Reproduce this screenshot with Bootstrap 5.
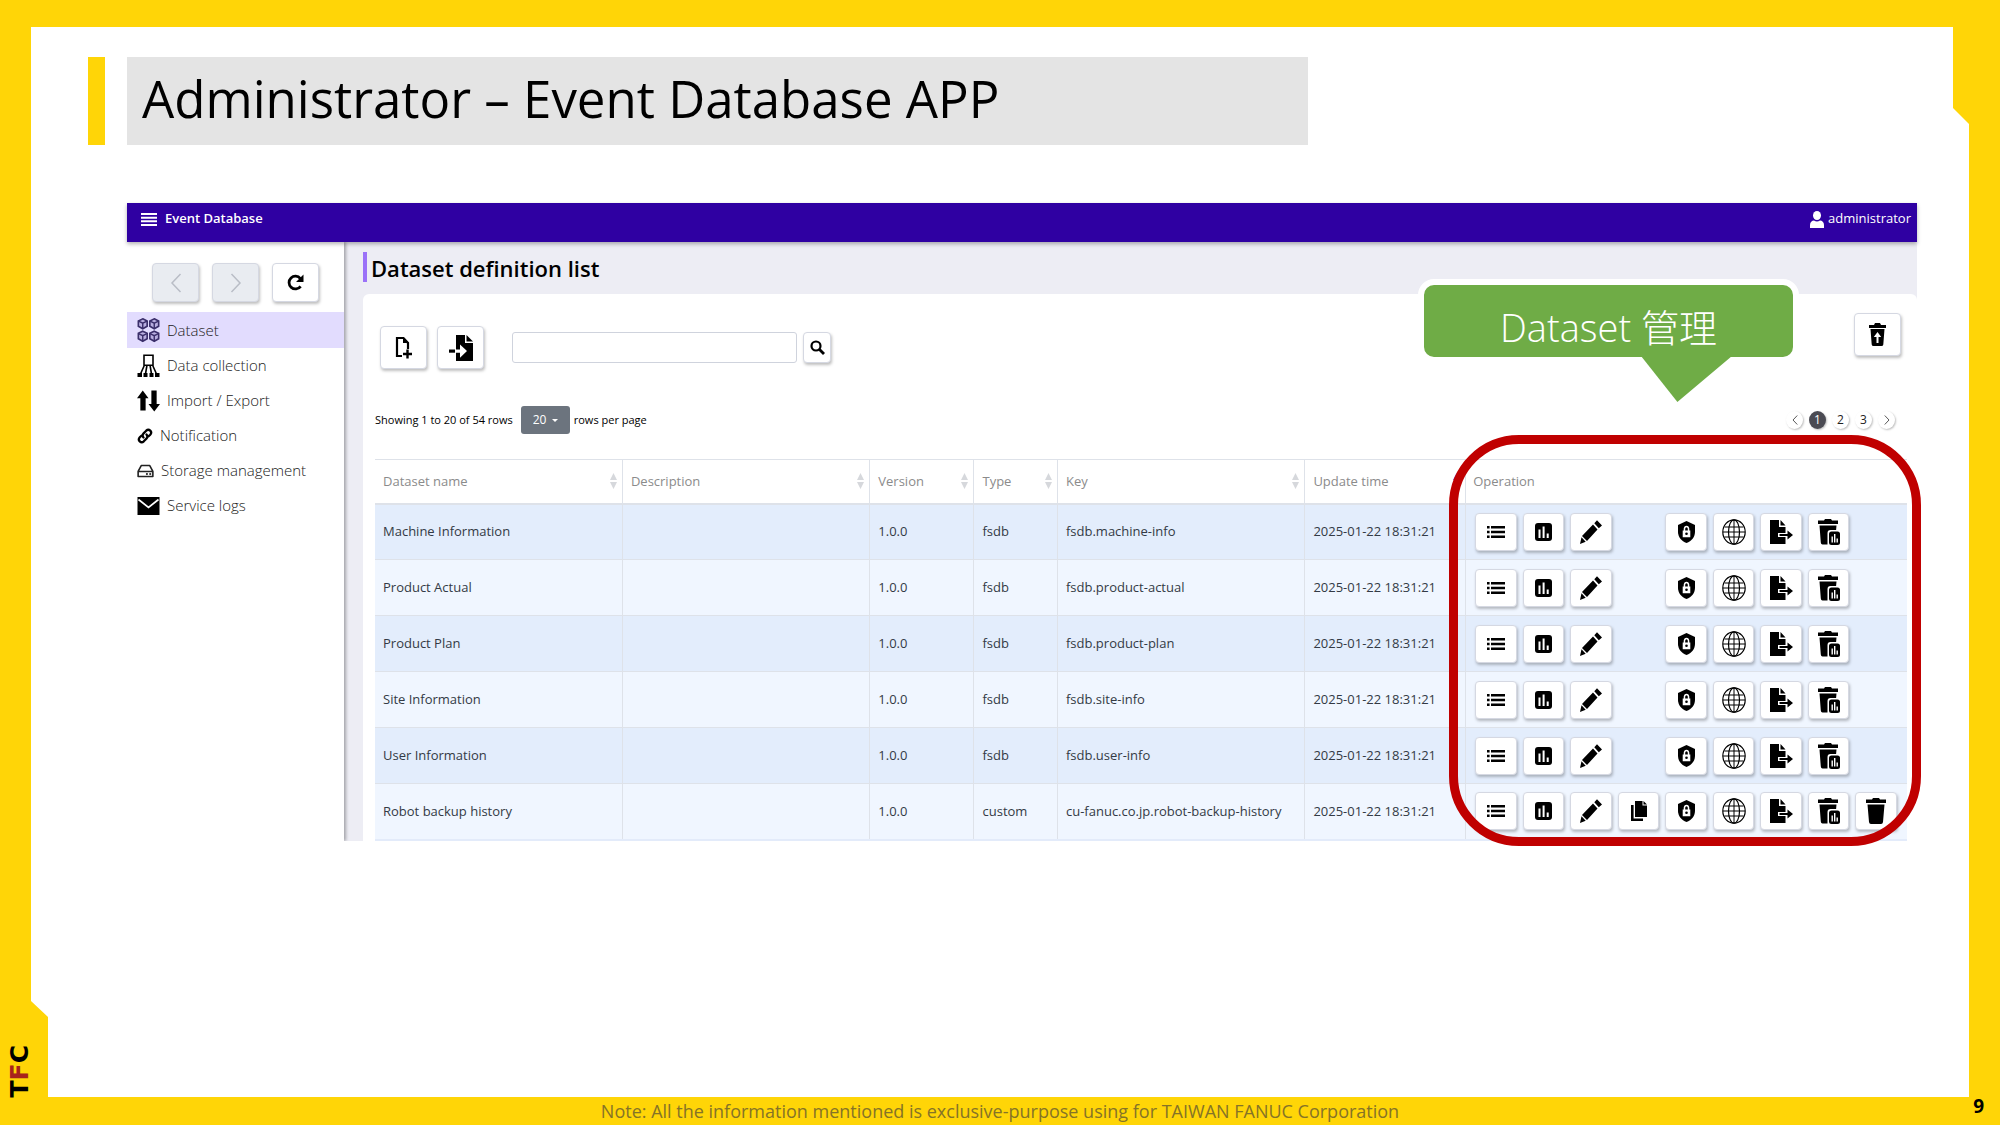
<!DOCTYPE html>
<html lang="en">
<head>
<meta charset="utf-8">
<meta name="viewport" content="width=device-width, initial-scale=1">
<title>Administrator – Event Database APP</title>
<link href="https://cdn.jsdelivr.net/npm/bootstrap@5.3.0/dist/css/bootstrap.min.css" rel="stylesheet">
<style>
  :root { --frame: #ffd507; --brand: #2f00a2; --line: #dee2e9; }
  body { background: var(--frame); font-family: "Open Sans", "Noto Sans", "Noto Sans CJK TC", sans-serif; color: #000; }
  .deck { min-height: 100vh; padding: 27px 31px 0 31px; }
  .sheet { background: #fff; padding: 30px 52px 0 57px;
    clip-path: polygon(0 0, calc(100% - 16px) 0, calc(100% - 16px) 81px, 100% 97px, 100% 100%, 17px 100%, 17px calc(100% - 80px), 0 calc(100% - 96px)); }
  .title-accent { width: 17px; background: var(--frame); }
  .title-box { width: 1181px; max-width: 90%; height: 88px; padding-left: 15px; margin-left: 22px; background: #e4e4e4; font-size: 51px; line-height: 82px; font-weight: 400; }
  .app { margin: 58px 0 0 39px; font-size: 13px; }
  .app-bar { height: 39px; padding: 0 6px 7px 14px; background: var(--brand); color: #fff; box-shadow: 0 2px 4px rgba(0,0,0,.3); z-index: 2; }
  .app-name { font-size: 13px; font-weight: 600; color: #fff; }
  .user-name { font-size: 13px; color: #fff; }
  .side { width: 217px; padding-top: 21px; box-shadow: 2px 0 3px rgba(0,0,0,.3); z-index: 1; }
  .side-tools { gap: 13px; padding-left: 25px; }
  .side-nav { margin-top: 10px; }
  .side-link { height: 35px; padding-left: 10px; gap: 7px; color: #222; font-size: 15px; font-weight: 300; text-decoration: none; }
  .side-link.on { background: #e2dcfe; height: 36px; }
  .tool { background: #fff; border: 1px solid #d5d8e2; border-radius: 4px; box-shadow: 1px 2px 3px rgba(0,0,0,.25); padding: 0; color: #000; display: inline-flex; align-items: center; justify-content: center; }
  .tool:disabled { background: #e9ecf1; color: #b9bdc6; }
  .tool-nav { width: 47px; height: 39px; }
  .tool-big { width: 47px; height: 43px; }
  .tool-find { width: 28px; height: 31px; }
  .tool-row { height: 38px; }
  .work { background: #ededf4; padding: 10px 0 0 19px; }
  .work-title { border-left: 4px solid #9b72f8; height: 30px; padding-left: 4px; font-size: 22px; line-height: 32px; font-weight: 600; margin: 0 0 12px; }
  .panel { background: #fff; border-radius: 6px 6px 0 0; padding: 19px 10px 0 12px; }
  .panel-tools { gap: 10px; padding: 13px 0 0 5px; }
  .find-box { width: 285px; height: 31px; margin-left: 18px; margin-right: -4px; border: 1px solid #cfd3dd; border-radius: 3px; }
  .tool-restore { margin-right: 6px; }
  .rows-line { margin-top: 37px; height: 28px; font-size: 11px; }
  .page-size { width: 49px; height: 28px; border: 0; border-radius: 3px; background-color: #6c747e; color: #fff; font-size: 12px; padding: 0 0 0 12px; appearance: none; }
  .size-wrap::after { content: ""; position: absolute; right: 12px; top: 13px; border: 3px solid transparent; border-top-color: #fff; border-bottom: 0; }
  .pager { gap: 6px; font-size: 12px; padding-right: 12px; }
  .dot { width: 17px; height: 18px; border-radius: 50%; background: #fff; color: #222; display: flex; align-items: center; justify-content: center; text-decoration: none; box-shadow: 1px 1px 2px rgba(0,0,0,.25); }
  .dot.on { background: #4b4b53; color: #fff; }
  .grid-table { margin: 25px 0 0; table-layout: fixed; border-bottom: 2px solid #e3ebfa; font-size: 13px; }
  .grid-table th, .grid-table td { padding: 0 10px 0 8px; vertical-align: middle; border: 1px solid var(--line); border-width: 1px 0 1px 1px; white-space: nowrap; box-shadow: none; color: #333a45; background: transparent; }
  .grid-table th { height: 44px; font-weight: 400; color: #8b8b8b; border-bottom-width: 2px; background: #fff; }
  .grid-table tr > :first-child { border-left: 0; }
  .grid-table td { height: 56px; }
  .grid-table tbody tr:nth-child(odd) { background: #e3edfc; }
  .grid-table tbody tr:nth-child(even) { background: #f0f6ff; }
  .grid-table th:last-child { padding-left: 7px; }
  .grid-table td:last-child { padding-left: 9px; }
  .w-name { width: 16.15%; } .w-ver { width: 6.8%; } .w-type { width: 5.45%; } .w-time { width: 10.5%; } .w-ops { width: 28.8%; }
  .sorter { width: 7px; height: 16px; color: #d6d8dc; margin-right: -5px; }
  .ops { display: grid; grid-template-columns: repeat(9, 1fr); gap: 6px; }
  .callout { right: 118px; top: 76px; width: 381px; height: 84px; }
  .callout-text { border: 6px solid #fff; border-radius: 16px; background: #6fac46; color: #fff; font-size: 38px; font-weight: 300; line-height: 72px; height: 84px; padding-top: 6px; }
  .callout-tail { left: 223px; top: 77px; width: 91px; height: 46px; background: #6fac46; clip-path: polygon(0 0, 100% 0, 40% 100%); }
  .ring { right: -4px; top: 232px; bottom: -5px; width: 472px; border: 9px solid #c00000; border-radius: 70px; pointer-events: none; z-index: 3; }
  .foot { height: 28px; font-size: 18px; line-height: 28px; color: #857327; }
  .page-no { right: 16px; bottom: 5px; font-size: 19px; line-height: 28px; font-weight: 700; color: #000; font-family: "Noto Sans", sans-serif; }
  .tfc { left: 6px; bottom: 28px; writing-mode: vertical-rl; transform: rotate(180deg); font: 700 25px/28px "DejaVu Sans", sans-serif; }
  .tfc span { color: #a8231c; }
  svg { display: block; flex: none; }
</style>
<script src="https://cdn.jsdelivr.net/npm/bootstrap@5.3.0/dist/js/bootstrap.bundle.min.js"></script>
</head>
<body>
<svg width="0" height="0" class="position-absolute" aria-hidden="true">
  <symbol id="i-cube" viewBox="0 0 12 12"><path d="M6 .8 10.600 3v5.600L6 11.200 1.400 8.600V3z" fill="#b9aee0" stroke="#3b2f6b" stroke-width="1.700"/><path d="M1.600 3.200 6 5.400l4.400-2.200M6 5.400V11" fill="none" stroke="#3b2f6b" stroke-width="1.500"/></symbol>
  <symbol id="i-cubes" viewBox="0 0 24 26"><use href="#i-cube" x="0" y="0" width="12" height="13"/><use href="#i-cube" x="12" y="0" width="12" height="13"/><use href="#i-cube" x="0" y="13" width="12" height="13"/><use href="#i-cube" x="12" y="13" width="12" height="13"/></symbol>
  <symbol id="i-collect" viewBox="0 0 22 24"><path d="M6.500 1.200h9v10h-9zM7 11 3 20M9.500 11 8 20M12.500 11 14 20M15 11l4 9" fill="none" stroke="#000" stroke-width="1.600"/><path d="M0 19h4.500v4H0zM6 19h4v4H6zM12 19h4v4h-4zM17.500 19H22v4h-4.500z"/></symbol>
  <symbol id="i-updown" viewBox="0 0 24 22"><path d="M6 0l6 8H9v13H3.500V8H0zM18 22l-6-8h3V0h5.500v14H24z"/></symbol>
  <symbol id="i-link" viewBox="0 0 16 16"><g fill="none" stroke="#000" stroke-width="2.300" stroke-linecap="round"><path d="M6.500 9.500C5.200 8 5.600 6.400 6.600 5.400l2.600-2.700c2.800-2.600 6.600 1.200 4 4l-1.600 1.600"/><path d="M9.500 6.500c1.300 1.500.9 3.100-.1 4.100l-2.600 2.700c-2.800 2.600-6.600-1.200-4-4l1.600-1.600"/></g></symbol>
  <symbol id="i-disk" viewBox="0 0 18 14"><path d="M1.200 7.500 4.500 1.200h9l3.300 6.300v5.300H1.200zM1.200 7.500h15.600" fill="none" stroke="#222" stroke-width="1.700" stroke-linejoin="round"/><path d="M9.500 9.300h2v1.800h-2zM13 9.300h2v1.800h-2z"/></symbol>
  <symbol id="i-mail" viewBox="0 0 22 18"><path d="M0 0h22v18H0z"/><path d="M1 2.500 11 10.500 21 2.500" fill="none" stroke="#fff" stroke-width="1.700"/></symbol>
  <symbol id="i-left" viewBox="0 0 12 20"><path d="M10.500 1 2 10l8.500 9" fill="none" stroke="currentColor" stroke-width="1.500"/></symbol>
  <symbol id="i-right" viewBox="0 0 12 20"><path d="M1.500 1 10 10l-8.500 9" fill="none" stroke="currentColor" stroke-width="1.500"/></symbol>
  <symbol id="i-reload" viewBox="0 0 16 16"><path d="M12.800 11.600A6 6 0 1 1 12.600 4.300" fill="none" stroke="#000" stroke-width="2.600"/><path d="M15.500.5v7h-7z"/></symbol>
  <symbol id="i-bars" viewBox="0 0 16 13"><path d="M0 0h16v2H0zM0 3.700h16v2H0zM0 7.300h16v2H0zM0 11h16v2H0z" fill="#fff"/></symbol>
  <symbol id="i-user" viewBox="0 0 14 17"><ellipse cx="7" cy="4.500" rx="4" ry="4.500" fill="#fff"/><path d="M0 17v-3c0-3 2-4.500 4-4.500q3 2 6 0c2 0 4 1.500 4 4.500v3z" fill="#fff"/></symbol>
  <symbol id="i-newdoc" viewBox="0 0 17 23"><path d="M7 20H2V2h6.500L13 7v6" fill="none" stroke="#000" stroke-width="2.200"/><path d="M8 1v6h6zM11.300 13.500h2.400v3.300H17v2.400h-3.300v3.300h-2.400v-3.300H8v-2.400h3.300z"/></symbol>
  <symbol id="i-import" viewBox="0 0 24 26"><path d="M7 0h9v8h8v18H7z"/><path d="M17.500 0v6.500H24z"/><path d="M0 14.500h6v3.200H0z"/><path d="M7 14.500h4v-5l7 6.600-7 6.600v-5H7z" fill="#fff"/></symbol>
  <symbol id="i-search" viewBox="0 0 15 15"><circle cx="6" cy="6" r="4.500" fill="none" stroke="#000" stroke-width="2.200"/><path d="M9.500 9.500 14 14" stroke="#000" stroke-width="2.800"/></symbol>
  <symbol id="i-binup" viewBox="0 0 17 23"><path d="M0 2h5l1-2h5l1 2h5v3H0zM1.500 6h14l-1.200 15.500q-.2 1.500-1.800 1.500h-8q-1.600 0-1.800-1.500z"/><path d="M7.500 20v-6H4.800L8.500 9l3.700 5H9.500v6z" fill="#fff"/></symbol>
  <symbol id="i-sort" viewBox="0 0 7 16"><path d="M3.500 0 7 7H0zM3.500 16 7 9H0z" fill="currentColor"/></symbol>
  <symbol id="i-sortup" viewBox="0 0 7 16"><path d="M3.500 0 7 7H0z" fill="#7c4df0"/></symbol>
  <symbol id="i-list" viewBox="0 0 18 12"><path d="M0 0h2.600v2.400H0zM4 0h14v2.400H4zM0 4.800h2.600v2.400H0zM4 4.800h14v2.400H4zM0 9.600h2.600V12H0zM4 9.600h14V12H4z"/></symbol>
  <symbol id="i-chart" viewBox="0 0 17 18"><rect width="17" height="18" rx="3"/><path d="M3.500 6.500h2V15h-2zM7.600 3.500h2V15h-2zM11.700 10.500h2V15h-2z" fill="#fff"/></symbol>
  <symbol id="i-pencil" viewBox="0 0 22 24"><path d="M13 4.500 17.500 9.500 7 21 2 16zM14.300 3.200 17 .3 22 5.500 18.800 8.200zM1.500 17.300 5.700 21.800 0 24z"/></symbol>
  <symbol id="i-copy" viewBox="0 0 16 20"><path d="M4 0h7.500v4.500H16V16H4z"/><path d="M12.500 0v3.500H16zM0 4h2.600v13.500H12V20H0z"/></symbol>
  <symbol id="i-shield" viewBox="0 0 17 22"><path d="M8.500 0 17 4v7c0 5-3.500 9-8.500 11C3.500 20 0 16 0 11V4z"/><path d="M4.700 9.500h1V7.700q.3-3 2.800-3t2.800 3v1.800h1v6.800H4.700zM7.200 9.500h2.600V7.700q-.2-1.500-1.300-1.500T7.200 7.700z" fill="#fff" fill-rule="evenodd"/><circle cx="8.500" cy="12.700" r="1.300"/></symbol>
  <symbol id="i-globe" viewBox="0 0 24 26"><g fill="none" stroke="#000" stroke-width="1.200"><ellipse cx="12" cy="13" rx="11.200" ry="12.200"/><ellipse cx="12" cy="13" rx="5.500" ry="12.200"/><path d="M12 1v24M2.500 8h19M1 13h22M2.500 18h19" stroke-width="1"/></g></symbol>
  <symbol id="i-export" viewBox="0 0 23 24"><path d="M0 0h9v7h6.500v6H8v4h7.500v7H0z"/><path d="M10.500 0v5.500h5zM9.500 14h8v-3.500L23 15l-5.500 4.500V16h-8z"/></symbol>
  <symbol id="i-binchart" viewBox="0 0 22 26"><path d="M0 1.500h6L7 0h6l1 1.500h6V5H0zM1.500 6.500h17l-.4 4.500h-5.600Q9.500 11 9.500 14v11.500h-5q-1.500 0-1.700-2z"/><rect x="11" y="12.500" width="11" height="13.500" rx="2.500"/><path d="M13.500 17.500h1.400v6h-1.400zM16 15h1.400v8.500H16zM18.500 19.500h1.400v4h-1.400z" fill="#fff"/></symbol>
  <symbol id="i-bin" viewBox="0 0 20 26"><path d="M0 1.500h6L7 0h6l1 1.500h6V5H0zM1.500 6.500h17L17 24q-.2 2-2 2H5q-1.800 0-2-2z"/></symbol>
</svg>

<div class="deck d-flex flex-column position-relative">
  <main class="sheet flex-grow-1">
    <header class="d-flex">
      <div class="title-accent"></div>
      <h1 class="title-box mb-0 text-nowrap">Administrator – Event Database APP</h1>
    </header>

    <section class="app position-relative">
      <div class="app-bar d-flex align-items-center justify-content-between position-relative">
        <a href="#" class="app-name d-flex align-items-center gap-2 text-decoration-none"><svg width="16" height="13"><use href="#i-bars"/></svg>Event Database</a>
        <a href="#" class="user-name d-flex align-items-center gap-1 text-decoration-none"><svg width="14" height="17"><use href="#i-user"/></svg>administrator</a>
      </div>
      <div class="d-flex overflow-hidden">
        <aside class="side bg-white flex-shrink-0 position-relative">
          <div class="side-tools d-flex">
            <button class="tool tool-nav" type="button" aria-label="Back" disabled><svg width="12" height="20"><use href="#i-left"/></svg></button>
            <button class="tool tool-nav" type="button" aria-label="Forward" disabled><svg width="12" height="20"><use href="#i-right"/></svg></button>
            <button class="tool tool-nav" type="button" aria-label="Reload"><svg width="17" height="17"><use href="#i-reload"/></svg></button>
          </div>
          <nav class="side-nav">
            <a href="#" class="side-link on d-flex align-items-center"><svg width="23" height="26"><use href="#i-cubes"/></svg>Dataset</a>
            <a href="#" class="side-link d-flex align-items-center"><svg width="23" height="24"><use href="#i-collect"/></svg>Data collection</a>
            <a href="#" class="side-link d-flex align-items-center"><svg width="23" height="22"><use href="#i-updown"/></svg>Import / Export</a>
            <a href="#" class="side-link d-flex align-items-center"><svg width="16" height="18"><use href="#i-link"/></svg>Notification</a>
            <a href="#" class="side-link d-flex align-items-center"><svg width="17" height="14"><use href="#i-disk"/></svg>Storage management</a>
            <a href="#" class="side-link d-flex align-items-center"><svg width="23" height="18"><use href="#i-mail"/></svg>Service logs</a>
          </nav>
        </aside>
        <div class="work flex-grow-1">
          <h2 class="work-title">Dataset definition list</h2>
          <div class="panel">
            <div class="d-flex justify-content-between align-items-start">
              <div class="panel-tools d-flex align-items-center">
                <button class="tool tool-big" type="button" aria-label="New dataset"><svg width="17" height="23"><use href="#i-newdoc"/></svg></button>
                <button class="tool tool-big" type="button" aria-label="Import dataset"><svg width="24" height="26"><use href="#i-import"/></svg></button>
                <input class="find-box" type="search" aria-label="Search">
                <button class="tool tool-find" type="button" aria-label="Search"><svg width="15" height="15"><use href="#i-search"/></svg></button>
              </div>
              <button class="tool tool-big tool-restore" type="button" aria-label="Restore"><svg width="17" height="23"><use href="#i-binup"/></svg></button>
            </div>
            <div class="rows-line d-flex align-items-center justify-content-between">
              <div class="d-flex align-items-center">
                <label for="size" class="me-2">Showing 1 to 20 of 54 rows</label>
                <span class="size-wrap position-relative me-1"><select id="size" class="page-size"><option>20</option><option>50</option></select></span>
                <span>rows per page</span>
              </div>
              <nav class="pager d-flex" aria-label="Pages">
                <a class="dot" href="#" aria-label="Previous"><svg width="6" height="10"><use href="#i-left"/></svg></a>
                <a class="dot on" href="#">1</a><a class="dot" href="#">2</a><a class="dot" href="#">3</a>
                <a class="dot" href="#" aria-label="Next"><svg width="6" height="10"><use href="#i-right"/></svg></a>
              </nav>
            </div>
            <table class="table grid-table">
              <thead><tr id="heads"></tr></thead>
              <tbody id="rows"></tbody>
            </table>
          </div>
        </div>
      </div>

      <div class="ring position-absolute"></div>
      <div class="callout position-absolute">
        <div class="callout-text text-center">Dataset 管理</div>
        <div class="callout-tail position-absolute"></div>
      </div>
    </section>
  </main>
  <footer class="foot text-center">Note: All the information mentioned is exclusive-purpose using for TAIWAN FANUC Corporation</footer>
  <div class="page-no position-absolute">9</div>
  <div class="tfc position-absolute">T<span>F</span>C</div>
</div>

<script>
  const heads = [["Dataset name", "w-name"], ["Description", "w-name"], ["Version", "w-ver"], ["Type", "w-type"], ["Key", "w-name"], ["Update time", "w-time"], ["Operation", "w-ops"]];
  document.getElementById("heads").innerHTML = heads.map(([t, w], i) =>
    `<th class="${w}" scope="col"><div class="d-flex align-items-center justify-content-between">${t}${i < 6 ? `<svg class="sorter"><use href="#i-sort${i === 5 ? "up" : ""}"/></svg>` : ""}</div></th>`).join("");

  const icons = [["list", 18, 12, "Records"], ["chart", 17, 18, "Chart"], ["pencil", 22, 24, "Edit"], ["copy", 16, 20, "Copy"], ["shield", 17, 22, "Access"], ["globe", 24, 26, "Language"], ["export", 23, 24, "Export"], ["binchart", 22, 26, "Clear data"], ["bin", 20, 26, "Delete"]];
  const rows = [["Machine Information", "fsdb", "fsdb.machine-info"], ["Product Actual", "fsdb", "fsdb.product-actual"], ["Product Plan", "fsdb", "fsdb.product-plan"], ["Site Information", "fsdb", "fsdb.site-info"], ["User Information", "fsdb", "fsdb.user-info"], ["Robot backup history", "custom", "cu-fanuc.co.jp.robot-backup-history"]];
  document.getElementById("rows").innerHTML = rows.map(([name, type, key]) => {
    const ops = icons.map(([id, w, h, label]) =>
      type === "fsdb" && (id === "copy" || id === "bin") ? "<span></span>" :
      `<button class="tool tool-row" type="button" aria-label="${label}"><svg width="${w}" height="${h}"><use href="#i-${id}"/></svg></button>`).join("");
    return `<tr><td>${name}</td><td></td><td>1.0.0</td><td>${type}</td><td>${key}</td><td>2025-01-22 18:31:21</td><td><div class="ops">${ops}</div></td></tr>`;
  }).join("");
</script>
</body>
</html>
